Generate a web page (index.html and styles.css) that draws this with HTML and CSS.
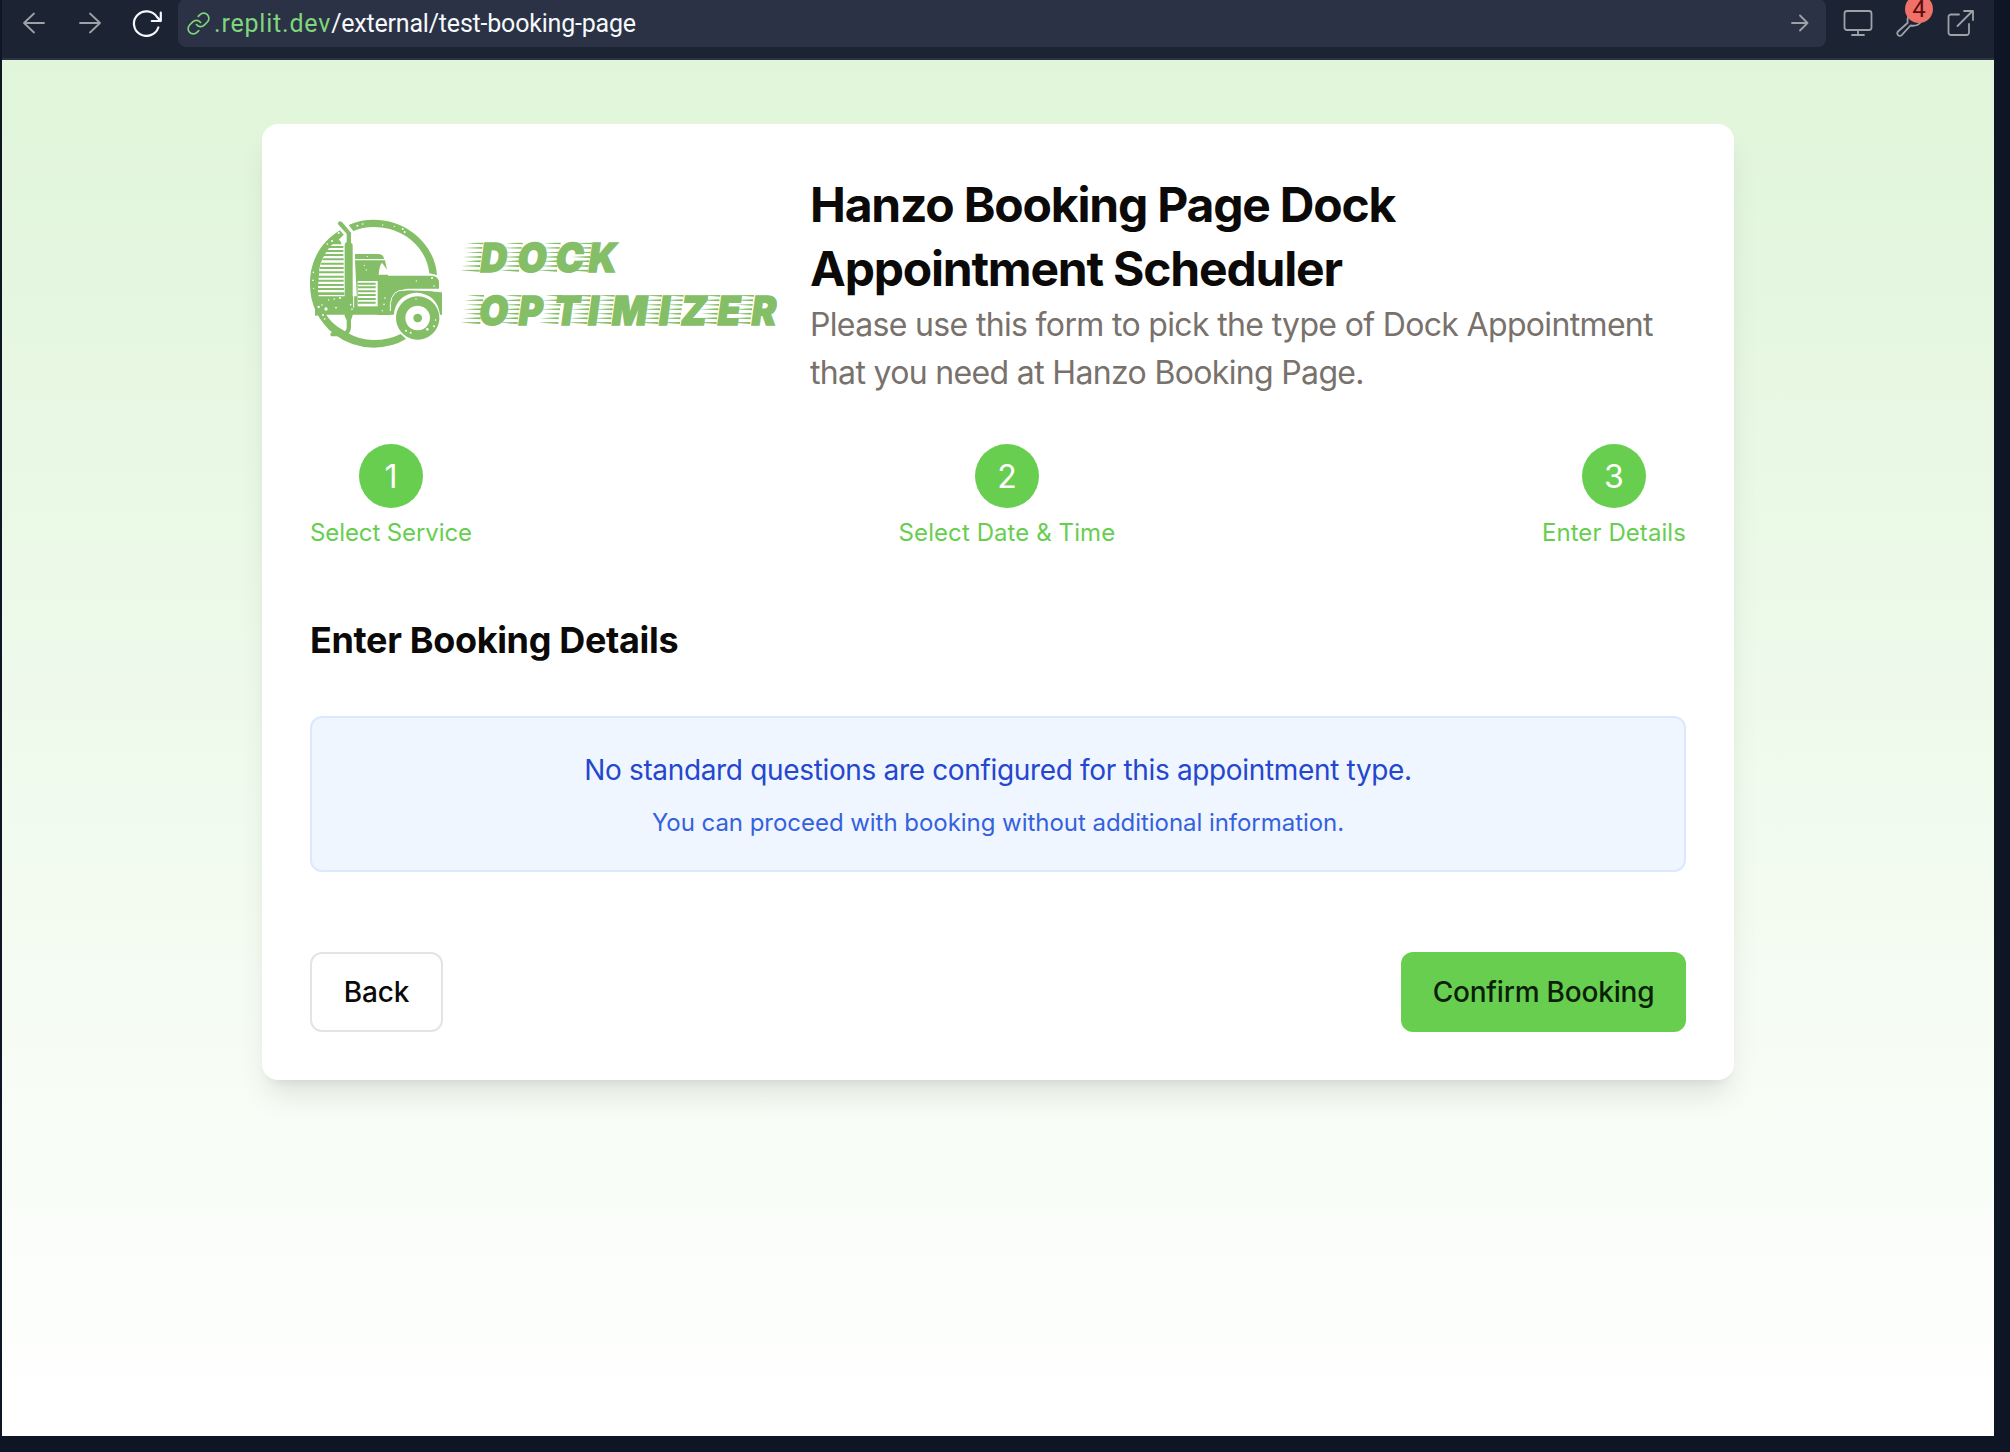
FILE: index.html
```html
<!DOCTYPE html>
<html lang="en">
<head>
<meta charset="utf-8">
<title>Hanzo Booking Page Dock Appointment Scheduler</title>
<link rel="stylesheet" href="styles.css">
</head>
<body>
<header class="toolbar">
  <svg class="icon nav-back" width="22" height="22" viewBox="0 0 22 22"><path d="M21 11H1M11 1.500L1 11l10 9.500"/></svg>
  <svg class="icon nav-forward" width="22" height="22" viewBox="0 0 22 22"><path d="M1 11h20M11 1.500L21 11l-10 9.500"/></svg>
  <svg class="icon nav-reload" width="30" height="28" viewBox="0 0 30 28"><path d="M26.300 18.500A12.500 12.300 0 1 1 25 8l3.500 4M28.800 3.500V12h-9"/></svg>
  <div class="address">
    <svg class="icon link" width="25" height="25" viewBox="0 0 24 24"><path d="M10 13a5 5 0 0 0 7.540.54l3-3a5 5 0 0 0-7.070-7.070l-1.720 1.710M14 11a5 5 0 0 0-7.540-.54l-3 3a5 5 0 0 0 7.070 7.070l1.710-1.710"/></svg>
    <span class="url"><span class="host">.replit.dev</span><span class="path">/external/test-booking-page</span></span>
    <svg class="icon go" width="18" height="18" viewBox="0 0 18 18"><path d="M1 9h15.500M9 1.500L16.500 9 9 16.500"/></svg>
  </div>
  <div class="tools">
    <svg class="icon" width="30" height="28" viewBox="0 0 30 28"><rect x="1.500" y="2" width="27" height="19" rx="2.500"/><path d="M15 21v5M9 26h12"/></svg>
    <div class="devtools">
      <svg class="icon" width="30" height="28" viewBox="0 0 30 28"><path d="M13 8c-1 3 0 5-.5 6l-9.500 8.500a2.600 2.600 0 0 0 3.700 3.700L15.500 16.500c3 .5 7.500 0 10-3"/></svg>
      <span class="badge">4</span>
    </div>
    <svg class="icon" width="28" height="28" viewBox="0 0 28 28"><path d="M12 5.500H4a2.500 2.500 0 0 0-2.500 2.500v15.500A2.500 2.500 0 0 0 4 26h15.500a2.500 2.500 0 0 0 2.500-2.500V15M10.500 17L25.500 2M17 2h9v9"/></svg>
  </div>
</header>

<main class="page">
  <section class="card">
    <div class="intro">
      <svg class="logo" width="468" height="136" viewBox="30 22 1404 408">
        <defs>
          <path id="dash" d="M62 0L12 1L32 3 62 5zM59 13L2 16 59 18.500zM58 27L8 29 58 32zM56 40L0 43 56 46zM54 53L6 56 54 59zM52 67L-4 70 52 73zM51 81L-8 82 20 85 51 87z"/>
        </defs>
        <g class="logo-fill">
          <path d="M146 46Q180 30 221 30C325 30 405 108 411 196L388 191C380 113 310 52 221 52Q188 52 160 64Z"/>
          <path d="M120 62L131 75C82 106 52 160 52 222Q52 270 76 311Q90 336 115 353L140 368Q177 391 221 391Q266 391 302 373L318 388Q275 414 221 414Q155 414 103 374C56 336 30 285 30 222C30 150 65 95 120 62Z"/>
          <path d="M118 66L131 75L112 95h-28L60 150 52 262H34C26 190 50 105 118 66Z"/>
          <path d="M100 92h20l5 12h-30zM87 109h43v6h-47zM80 121h50v6h-55zM74 133h56v6h-60zM69 146h62v6h-64zM64 159h67v6h-69zM60 172h71v6h-72zM57 185h74v6h-75zM55 198h76v6h-77zM53 210h78v6h-79zM52 223h79v6h-80zM51 235h81v6h-81zM52 248h81v8h-80z"/>
          <path d="M45 260h235v55h-200L45 318Z"/>
          <path d="M134 105q0-6 6-7V72L114 44q-2-7 6-9l6 2 27 32v31q5 1 5 7v210l-5 15v20q0 15-10 22l-12 6H93q-5-9 3-13h31q12-2 13-13v-22l-6-12Z"/>
          <path d="M165 133h72q14 2 15 15h-87zM165 152h90l6 28-15-21q-8 8-10 36h28v3h132q20 2 21 20v19h-95q-45 5-50 79h-40v-25h-60z"/>
          <path d="M271 305q-3-60 45-64l110 5v69h-6q-8-60-67-66c-43 0-69 30-71 66z"/>
          <path fill-rule="evenodd" d="M353 260a65 65 0 1 0 .1 0zM353 288a37 37 0 1 1-.1 0zM353 312a13 13 0 1 0 .1 0z"/>
        </g>
        <g class="logo-gap">
          <path d="M173 214h60v76h-60z"/>
          <path d="M161 198v96M271 304q-4-50 26-61 60-8 128 4" class="logo-seam"/>
          <g><circle cx="172" cy="48" r="3"/><circle cx="188" cy="43" r="2.500"/><circle cx="248" cy="46" r="2"/><circle cx="283" cy="50" r="2"/><circle cx="308" cy="58" r="3"/><circle cx="314" cy="67" r="3"/><circle cx="116" cy="70" r="3"/><circle cx="96" cy="94" r="3"/><circle cx="82" cy="103" r="2.500"/><circle cx="40" cy="188" r="2.500"/><circle cx="39" cy="212" r="2.500"/><circle cx="41" cy="236" r="2"/><circle cx="56" cy="292" r="3.500"/><circle cx="78" cy="298" r="5"/><circle cx="66" cy="286" r="2.500"/><circle cx="86" cy="271" r="2"/><circle cx="103" cy="268" r="2.500"/><circle cx="120" cy="265" r="3"/><circle cx="108" cy="294" r="2.500"/><circle cx="69" cy="316" r="3"/><circle cx="74" cy="328" r="2.500"/><circle cx="152" cy="285" r="2.500"/><circle cx="156" cy="299" r="2.500"/><circle cx="193" cy="167" r="2"/><circle cx="199" cy="181" r="2"/><circle cx="202" cy="140" r="2"/><circle cx="349" cy="214" r="2"/><circle cx="396" cy="205" r="3"/><circle cx="402" cy="229" r="2.500"/><circle cx="255" cy="265" r="2.500"/><circle cx="252" cy="284" r="2.500"/><circle cx="247" cy="303" r="2"/><circle cx="318" cy="363" r="3"/><circle cx="332" cy="369" r="3"/><circle cx="382" cy="359" r="4"/><circle cx="402" cy="350" r="3"/><circle cx="407" cy="331" r="2.500"/><circle cx="348" cy="268" r="2"/></g>
        </g>
        <path class="logo-fill" d="M174 219h53v6h-53zM174 230h53v6h-53zM174 242h53v6h-53zM174 253h53v6h-53zM174 265h53v6h-53zM174 276h53v6h-53z"/>
        <g class="logo-fill">
          <use href="#dash" x="488" y="99"/><use href="#dash" x="606" y="99"/><use href="#dash" x="720" y="99"/><use href="#dash" x="814" y="99"/>
          <use href="#dash" x="490" y="256"/><use href="#dash" x="602" y="256"/><use href="#dash" x="724" y="256"/><use href="#dash" x="811" y="256"/><use href="#dash" x="882" y="256"/><use href="#dash" x="1024" y="256"/><use href="#dash" x="1089" y="256"/><use href="#dash" x="1199" y="256"/><use href="#dash" x="1300" y="256"/>
        </g>
        <text class="logo-fill logo-type" transform="translate(0 186) skewX(-8) scale(.93 1)" x="577 698 820 926">DOCK</text>
        <text class="logo-fill logo-type" transform="translate(0 345) skewX(-8) scale(.93 1)" x="573 700 815 924 1001 1153 1224 1342 1452">OPTIMIZER</text>
      </svg>
      <div class="intro-text">
        <h1>Hanzo Booking Page Dock<br>Appointment Scheduler</h1>
        <p>Please use this form to pick the type of Dock Appointment<br>that you need at Hanzo Booking Page.</p>
      </div>
    </div>
    <ol class="steps">
      <li><span class="dot">1</span><span class="label">Select Service</span></li>
      <li><span class="dot">2</span><span class="label label-wide">Select Date &amp; Time</span></li>
      <li><span class="dot">3</span><span class="label label-wide">Enter Details</span></li>
    </ol>
    <h2>Enter Booking Details</h2>
    <div class="notice">
      <p class="notice-title">No standard questions are configured for this appointment type.</p>
      <p class="notice-hint">You can proceed with booking without additional information.</p>
    </div>
    <div class="actions">
      <button class="btn btn-outline" type="button">Back</button>
      <button class="btn btn-primary" type="button">Confirm Booking</button>
    </div>
  </section>
</main>
</body>
</html>
```
FILE: styles.css
```css
* { box-sizing: border-box; }

body {
  margin: 0;
  height: 1452px;
  padding: 0 16px 16px 2px;
  display: flex;
  flex-direction: column;
  background: #0e1525;
  font-family: Inter, "Liberation Sans", sans-serif;
  color: #0c0a09;
  overflow: hidden;
}

h1, h2, p, ol { margin: 0; padding: 0; }

.toolbar {
  flex: none;
  height: 60px;
  display: flex;
  align-items: flex-start;
  background: #1c2333;
  border-bottom: 2px solid #2b3245;
}

.icon {
  flex: none;
  display: block;
  fill: none;
  stroke: #9da2a6;
  stroke-width: 1.8;
  stroke-linecap: round;
  stroke-linejoin: round;
}
.nav-back { margin: 12px 0 0 21px; }
.nav-forward { margin: 12px 0 0 34px; }
.nav-reload { margin: 9px 0 0 31px; stroke: #f5f9fc; stroke-width: 2.2; }

.address {
  width: 1648px;
  height: 48px;
  margin: -1px 0 0 16px;
  padding: 0 17px 0 8px;
  display: flex;
  align-items: center;
  border-radius: 8px;
  background: #2b3245;
}
.link { stroke: #7fd67c; stroke-width: 1.6; }
.url {
  flex: 1;
  margin: 2px 0 0 3px;
  font-family: Roboto, "Noto Sans", sans-serif;
  font-size: 25px;
  line-height: 28px;
  white-space: nowrap;
}
.host { color: #7fd67c; letter-spacing: .8px; }
.path { color: #f5f9fc; letter-spacing: -.2px; }

.tools {
  display: flex;
  gap: 22px;
  margin: 9px 0 0 17px;
}
.devtools { position: relative; }
.badge {
  position: absolute;
  left: 10px;
  top: -14px;
  width: 28px;
  height: 28px;
  padding-top: 5px;
  border-radius: 50%;
  background: #f0716a;
  color: #5a0f0c;
  font: 24px/19px Roboto, sans-serif;
  text-align: center;
}

.page {
  flex: 1;
  padding: 64px 260px 0;
  background: linear-gradient(#e0f5da, #fff);
}

.card {
  height: 956px;
  padding: 48px;
  border-radius: 16px;
  background: #fff;
  box-shadow: 0 20px 30px -6px rgba(0, 0, 0, .1), 0 8px 12px -8px rgba(0, 0, 0, .1);
}

.intro {
  display: flex;
  align-items: center;
  gap: 32px;
  height: 224px;
  padding-top: 2px;
}
.logo { flex: none; overflow: visible; }
.logo-fill { fill: #84be67; }
.logo-gap { fill: #fff; }
.logo-seam { fill: none; stroke: #fff; stroke-width: 3; }
.logo-type { font: 900 120px Inter, sans-serif; stroke: #84be67; stroke-width: 4; }

.intro-text { white-space: nowrap; }
h1 { font-size: 48px; line-height: 64px; font-weight: 690; letter-spacing: -1.2px; }
.intro-text p { font-size: 32px; line-height: 48px; letter-spacing: -.66px; color: #78716c; }

.steps {
  display: flex;
  justify-content: space-between;
  margin-top: 48px;
  list-style: none;
}
.steps li {
  display: flex;
  flex-direction: column;
  align-items: center;
  gap: 9px;
  color: #68ce50;
}
.dot {
  width: 64px;
  height: 64px;
  border-radius: 50%;
  background: #68ce50;
  color: #fff;
  font-size: 32px;
  line-height: 66px;
  text-align: center;
}
.label { font-size: 24px; line-height: 32px; letter-spacing: -.1px; }
.label-wide { letter-spacing: .08px; }

h2 { margin-top: 63px; font-size: 36px; line-height: 56px; font-weight: 650; letter-spacing: -.34px; }

.notice {
  height: 156px;
  margin-top: 48px;
  padding-top: 28px;
  border: 2px solid #dbe8fe;
  border-radius: 12px;
  background: #f0f6ff;
  text-align: center;
}
.notice-title { font-size: 28px; line-height: 48px; letter-spacing: -.34px; color: #2447cd; }
.notice-hint { margin-top: 13px; font-size: 24px; line-height: 32px; letter-spacing: -.04px; color: #3561e0; }

.actions {
  display: flex;
  justify-content: space-between;
  margin-top: 80px;
}
.btn {
  height: 80px;
  padding: 0;
  border: 0;
  border-radius: 12px;
  font: 480 28px Inter, sans-serif;
  letter-spacing: -.2px;
}
.btn-outline { width: 133px; border: 2px solid #e4e4e4; background: #fff; color: #0c0a09; }
.btn-primary { width: 285px; background: #68ce50; color: #0c1f08; }
```
